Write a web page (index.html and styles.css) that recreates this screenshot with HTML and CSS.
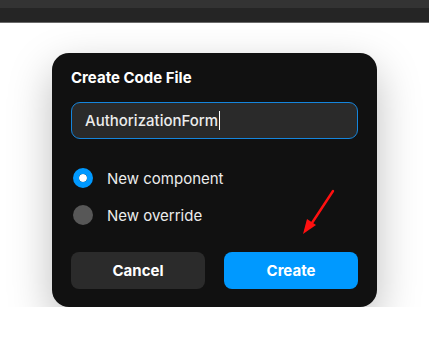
FILE: index.html
```html
<!DOCTYPE html>
<html lang="en">
<head>
  <meta charset="UTF-8">
  <meta name="viewport" content="width=device-width, initial-scale=1.0">
  <title>Create Code File</title>
  <link rel="stylesheet" href="styles.css">
</head>
<body>
  <div class="topbar">
    <div class="topbar-strip"></div>
  </div>

  <div class="dialog">
    <h3 class="dialog-title">Create Code File</h3>

    <div class="field">
      <span class="field-value">AuthorizationForm</span><span class="caret"></span>
    </div>

    <div class="options">
      <label class="option">
        <span class="radio radio-on"></span>
        <span>New component</span>
      </label>
      <label class="option">
        <span class="radio"></span>
        <span>New override</span>
      </label>
    </div>

    <div class="actions">
      <button class="button button-secondary">Cancel</button>
      <button class="button button-primary">Create</button>
    </div>

    <svg class="pointer" width="40" height="50" viewBox="0 0 40 50">
      <line x1="31" y1="3" x2="8" y2="38" stroke="#ff1010" stroke-width="2.4" stroke-linecap="round" />
      <polygon points="1,46 5,31 14,37" fill="#ff1010" />
    </svg>
  </div>
</body>
</html>
```

FILE: styles.css
```css
body {
  margin: 0;
  padding: 0;
  font-family: Inter, "Noto Sans", sans-serif;
  background-color: #ffffff;
}
.topbar {
  height: 22px;
  background-color: #252525;
  border-bottom: 1px solid #6a6a6a;
}
.topbar-strip {
  height: 8px;
  background-color: #333333;
}
.dialog {
  position: relative;
  width: 325px;
  box-sizing: border-box;
  margin: 30px auto 0;
  padding: 15px 19px 18px;
  background-color: #111111;
  border-radius: 17px;
  box-shadow: 0px 16px 44px rgba(0, 0, 0, 0.26);
}
.dialog-title {
  margin: 0;
  font-size: 15px;
  line-height: 20px;
  font-weight: bold;
  color: #ffffff;
}
.field {
  display: flex;
  align-items: center;
  height: 37px;
  margin-top: 14px;
  padding: 0 13px;
  box-sizing: border-box;
  background-color: #2a2a2a;
  border: 1px solid #1585dc;
  border-radius: 9px;
  font-size: 15px;
  font-weight: 500;
  color: #ececec;
}
.caret {
  width: 1px;
  height: 19px;
  margin-left: 1px;
  background-color: #ffffff;
}
.options {
  display: flex;
  flex-direction: column;
  gap: 17px;
  margin-top: 29px;
}
.option {
  display: flex;
  align-items: center;
  gap: 14px;
  height: 20px;
  padding-left: 2px;
  font-size: 15px;
  color: #ececec;
}
.radio {
  width: 20px;
  height: 20px;
  border-radius: 50%;
  background-color: #575757;
  box-sizing: border-box;
}
.radio-on {
  border: 6px solid #0099ff;
  background-clip: content-box;
  background-color: #ffffff;
}
.actions {
  display: flex;
  gap: 19px;
  margin-top: 27px;
}
.button {
  flex: 1;
  height: 37px;
  border: none;
  border-radius: 8px;
  font-family: Inter, "Noto Sans", sans-serif;
  font-size: 15px;
  font-weight: bold;
  color: #ffffff;
  cursor: pointer;
}
.button-secondary {
  background-color: #2b2b2b;
}
.button-primary {
  background-color: #0099ff;
}
.pointer {
  position: absolute;
  left: 250px;
  top: 135px;
}
```
